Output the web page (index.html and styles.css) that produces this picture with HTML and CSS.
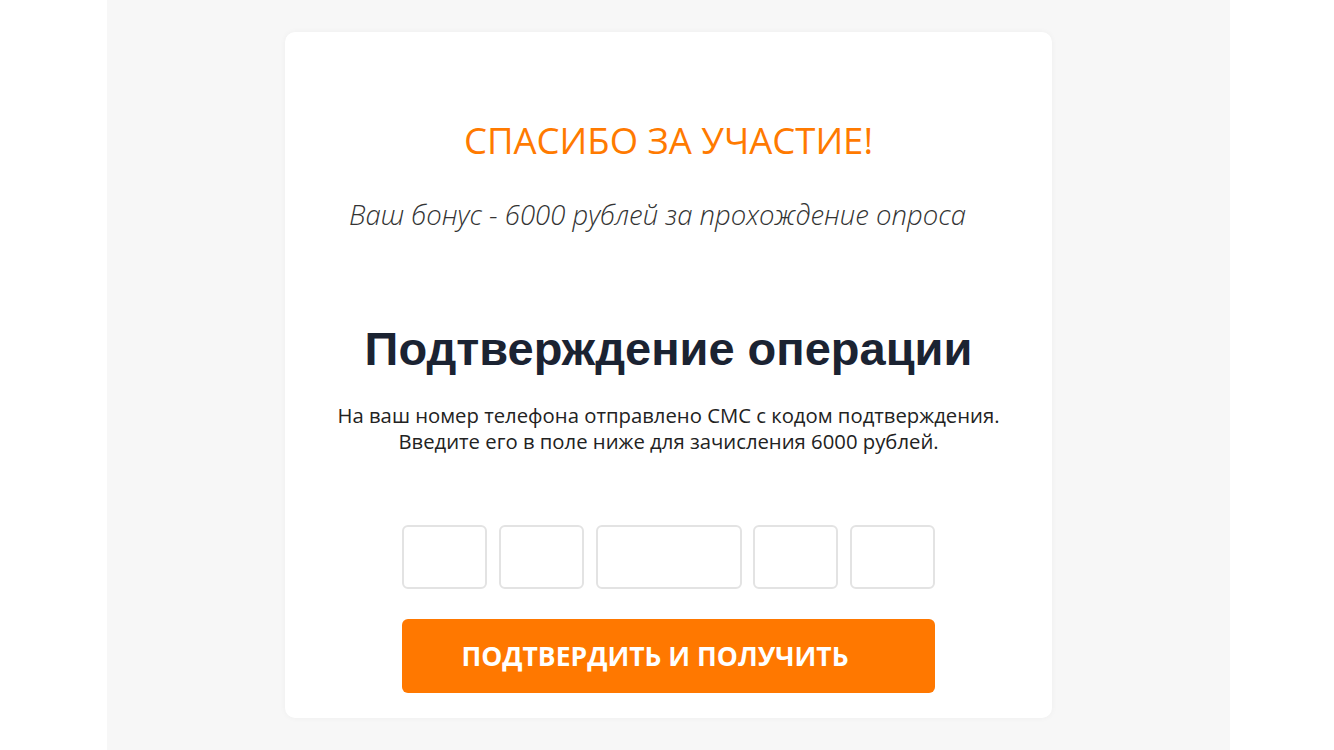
FILE: index.html
```html
<!DOCTYPE html>
<html lang="ru">
<head>
<meta charset="utf-8">
<link rel="stylesheet" href="styles.css">
</head>
<body>
<div class="stage">
  <div class="card">
    <h1 class="thanks">СПАСИБО ЗА УЧАСТИЕ!</h1>
    <p class="bonus">Ваш бонус - 6000 рублей за прохождение опроса</p>
    <h2 class="title">Подтверждение операции</h2>
    <p class="desc">На ваш номер телефона отправлено СМС с кодом подтверждения.<br>Введите его в поле ниже для зачисления 6000 рублей.</p>
    <div class="codes">
      <div class="box"></div>
      <div class="box"></div>
      <div class="box wide"></div>
      <div class="box"></div>
      <div class="box"></div>
    </div>
    <div class="btn">ПОДТВЕРДИТЬ И ПОЛУЧИТЬ</div>
  </div>
</div>
</body>
</html>
```
FILE: styles.css
```css
html, body {
  margin: 0;
  padding: 0;
  background: #ffffff;
}
.stage {
  margin-left: 107px;
  width: 1123px;
  height: 750px;
  background: #f7f7f7;
  padding-top: 32px;
  box-sizing: border-box;
}
.card {
  margin-left: 178px;
  width: 767px;
  height: 686px;
  background: #ffffff;
  border-radius: 10px;
  box-shadow: 0 0 6px rgba(0,0,0,0.04);
  display: flex;
  flex-direction: column;
  align-items: center;
  box-sizing: border-box;
  padding-top: 83px;
}
.thanks {
  margin: 0;
  font-family: "Open Sans", sans-serif;
  font-weight: 500;
  font-size: 36.5px;
  line-height: 50px;
  color: #ff7a00;
  white-space: nowrap;
}
.bonus {
  margin: 33px 22px 0 0;
  font-family: "Open Sans", sans-serif;
  font-weight: 300;
  font-style: italic;
  font-size: 27.5px;
  line-height: 34px;
  color: #333333;
  white-space: nowrap;
}
.title {
  margin: 87px 0 0;
  font-family: "Liberation Sans", Arial, sans-serif;
  font-weight: 700;
  font-size: 47px;
  line-height: 60px;
  color: #1b2332;
  white-space: nowrap;
}
.desc {
  margin: 23px 0 0;
  font-family: "Open Sans", sans-serif;
  font-size: 20.3px;
  line-height: 26px;
  color: #222222;
  text-align: center;
  white-space: nowrap;
}
.codes {
  margin-top: 71px;
  width: 533px;
  display: flex;
  gap: 11.5px;
}
.box {
  flex: 1;
  height: 64px;
  border: 2px solid #e3e3e3;
  border-radius: 6px;
  box-sizing: border-box;
}
.box.wide {
  flex: none;
  width: 146px;
}
.btn {
  margin-top: 30px;
  width: 533px;
  height: 74px;
  padding-right: 27px;
  box-sizing: border-box;
  background: #ff7800;
  border-radius: 6px;
  display: flex;
  align-items: center;
  justify-content: center;
  font-family: "Open Sans", sans-serif;
  font-weight: 700;
  font-size: 26.5px;
  color: #ffffff;
}
```
